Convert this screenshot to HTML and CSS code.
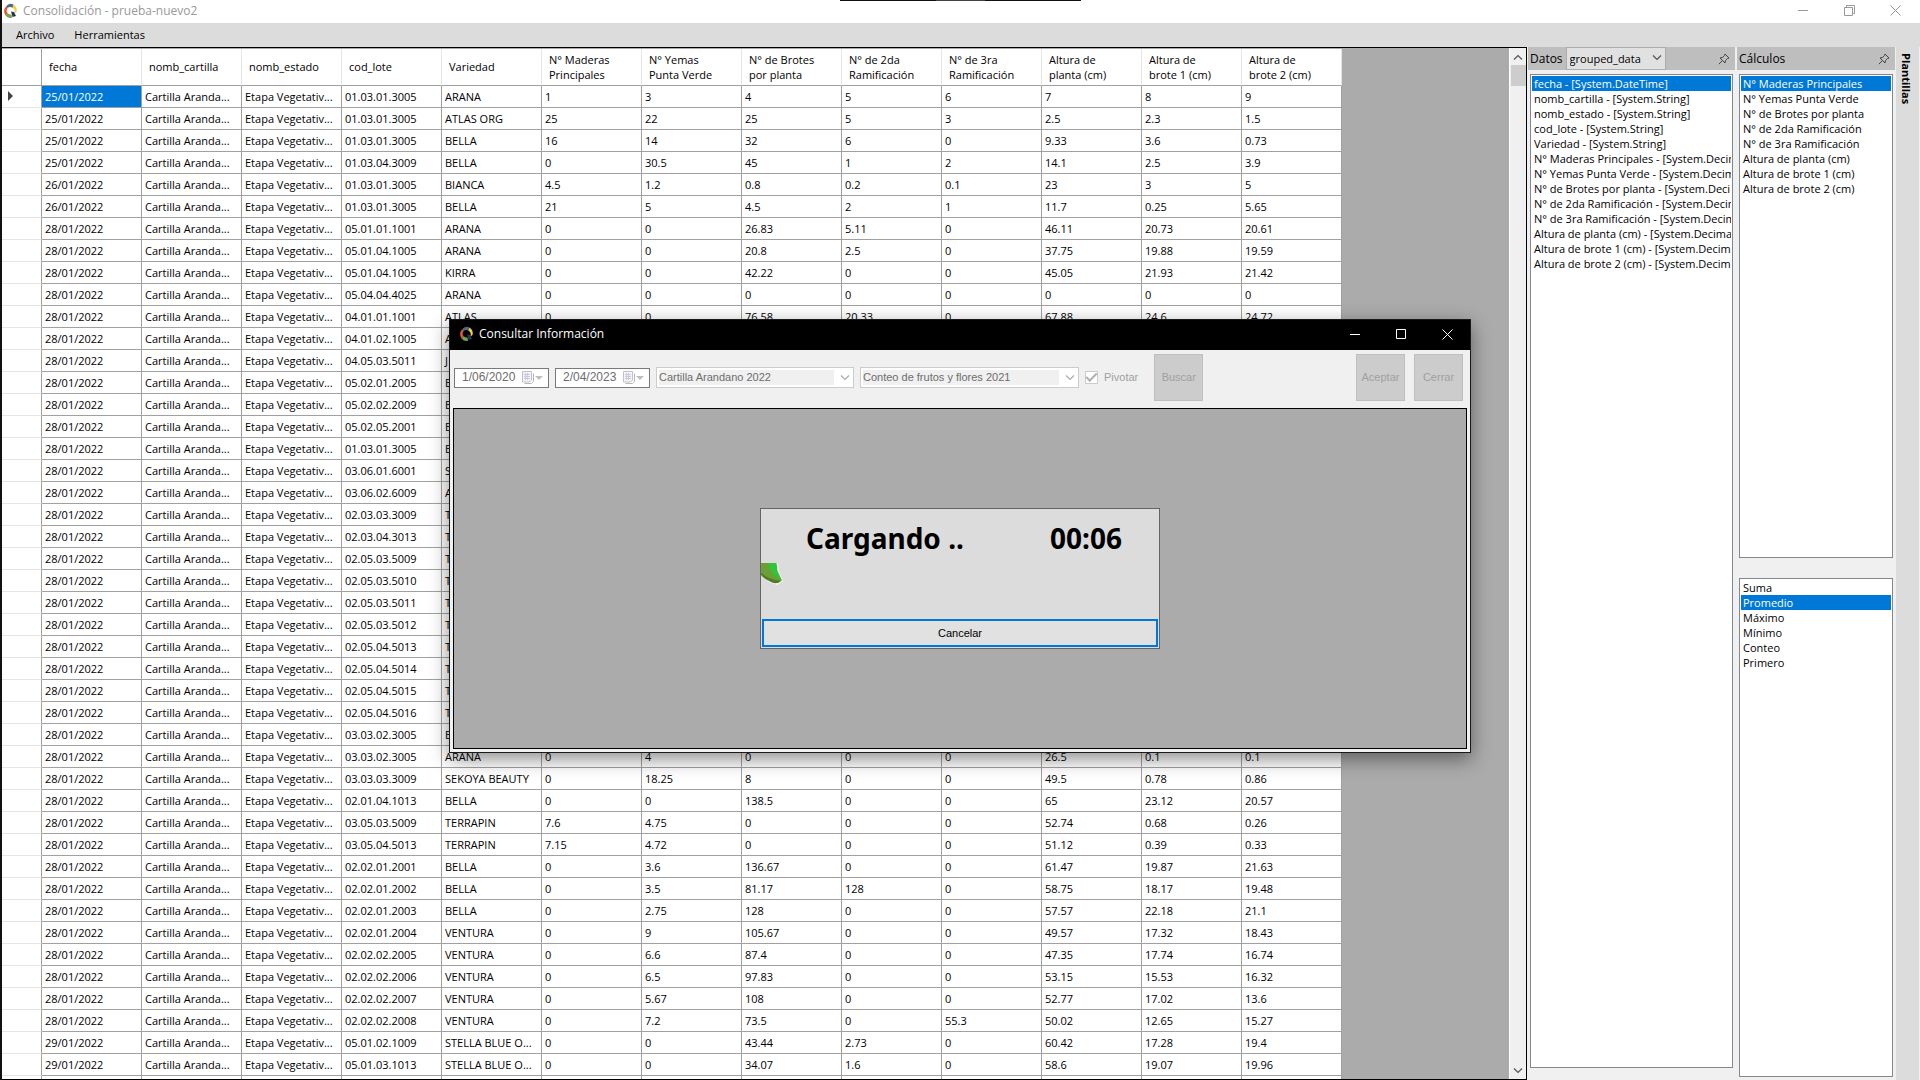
FILE: index.html
```html
<!DOCTYPE html>
<html lang="es">
<head>
<meta charset="utf-8">
<title>Consolidación - prueba-nuevo2</title>
<link rel="stylesheet" href="styles.css">
</head>
<body>
<svg class="defs" aria-hidden="true">
  <symbol id="logo" viewBox="0 0 14 16">
    <path d="M3 3.5A6 6 0 0 1 10.500 1.500L9.500 5A4 4 0 0 0 4.500 5Z" fill="#4f6a8c"/>
    <path d="M10.500 1.500A7 7 0 0 1 13.500 9L11 11A5 5 0 0 0 9.500 4.500Z" fill="#f5cf3a"/>
    <path d="M3 3.500A7 7 0 0 0 2.500 12.500L5 10.500A4 4 0 0 1 4.800 5Z" fill="#e4572e"/>
    <path d="M2.500 12.500A7 7 0 0 0 9 15L8.500 11.500A4 4 0 0 1 5 10.500Z" fill="#6fa84f"/>
    <path d="M8 8.500L11 9L13 13L9.500 14Z" fill="#2d3353"/>
  </symbol>
  <symbol id="chevron" viewBox="0 0 10 6"><path d="M1 .5L5 4.500L9 .5" fill="none" stroke="currentColor" stroke-width="1.200"/></symbol>
  <symbol id="pin" viewBox="0 0 12 12">
    <path d="M7 1L11 5L9.500 5.500L7.500 7.500L7 10L2 5L4.500 4.500L6.500 2.500ZM4.500 7.500L.8 11.200" fill="none" stroke="currentColor"/>
  </symbol>
  <symbol id="calendar" viewBox="0 0 12 13">
    <path d="M2.500 12.500H9.500L11.500 10.500V2.500" fill="none" stroke="#b9b6ba"/>
    <path d="M.5.5H9.500V9L7.500 11H.5Z" fill="#f4f5fa" stroke="#c4c0c6"/>
    <path d="M2 3.500H8M2 5.500H8M2 7.500H8M3.500 2V9M5.500 2V9" stroke="#c9ccdd"/>
  </symbol>
</svg>

<div class="app">
  <header class="titlebar">
    <svg class="logo"><use href="#logo"/></svg>
    <h1 class="caption">Consolidación - prueba-nuevo2</h1>
    <div class="winbtns">
      <button class="winbtn" aria-label="Minimizar"><svg width="11" height="11"><path d="M0 5.500H10" stroke="currentColor"/></svg></button>
      <button class="winbtn" aria-label="Restaurar"><svg width="11" height="11"><path d="M.5 2.500H8.500V10.500H.5ZM2.500 2.500V.5H10.500V8.500H8.500" fill="none" stroke="currentColor"/></svg></button>
      <button class="winbtn" aria-label="Cerrar ventana"><svg width="11" height="11"><path d="M.5.5L10.500 10.500M10.500.5L.5 10.500" stroke="currentColor"/></svg></button>
    </div>
    <div class="screen-tab"></div>
  </header>
  <nav class="menu">
    <button class="menu-item">Archivo</button>
    <button class="menu-item">Herramientas</button>
  </nav>
  <main class="work">
    <section class="grid">
      <div class="grid-body">
        <table class="data">
          <thead>
            <tr>
              <th class="rowhead"></th>
              <th>fecha</th><th>nomb_cartilla</th><th>nomb_estado</th><th>cod_lote</th><th>Variedad</th>
              <th>N° Maderas<br>Principales</th><th>N° Yemas<br>Punta Verde</th><th>N° de Brotes<br>por planta</th>
              <th>N° de 2da<br>Ramificación</th><th>N° de 3ra<br>Ramificación</th><th>Altura de<br>planta (cm)</th>
              <th>Altura de<br>brote 1 (cm)</th><th>Altura de<br>brote 2 (cm)</th>
            </tr>
          </thead>
          <tbody id="rows"></tbody>
        </table>
      </div>
      <div class="scrollbar">
        <svg class="arrow up"><use href="#chevron"/></svg>
        <div class="thumb"></div>
        <svg class="arrow down"><use href="#chevron"/></svg>
      </div>
    </section>

    <section class="panel datos">
      <div class="panel-head">
        <label for="source">Datos</label>
        <div class="combo source">
          <select id="source"><option>grouped_data</option></select>
          <svg class="chev"><use href="#chevron"/></svg>
        </div>
        <svg class="pin"><use href="#pin"/></svg>
      </div>
      <div class="panel-body">
        <select class="list" size="13" aria-label="Datos">
          <option selected>fecha - [System.DateTime]</option>
          <option>nomb_cartilla - [System.String]</option>
          <option>nomb_estado - [System.String]</option>
          <option>cod_lote - [System.String]</option>
          <option>Variedad - [System.String]</option>
          <option>N° Maderas Principales - [System.Decimal]</option>
          <option>N° Yemas Punta Verde - [System.Decimal]</option>
          <option>N° de Brotes por planta - [System.Decimal]</option>
          <option>N° de 2da Ramificación - [System.Decimal]</option>
          <option>N° de 3ra Ramificación - [System.Decimal]</option>
          <option>Altura de planta (cm) - [System.Decimal]</option>
          <option>Altura de brote 1 (cm) - [System.Decimal]</option>
          <option>Altura de brote 2 (cm) - [System.Decimal]</option>
        </select>
      </div>
    </section>

    <section class="panel calculos">
      <div class="panel-head">
        <label for="fields">Cálculos</label>
        <svg class="pin"><use href="#pin"/></svg>
      </div>
      <div class="panel-body">
        <select class="list fields" id="fields" size="8">
          <option selected>N° Maderas Principales</option>
          <option>N° Yemas Punta Verde</option>
          <option>N° de Brotes por planta</option>
          <option>N° de 2da Ramificación</option>
          <option>N° de 3ra Ramificación</option>
          <option>Altura de planta (cm)</option>
          <option>Altura de brote 1 (cm)</option>
          <option>Altura de brote 2 (cm)</option>
        </select>
        <select class="list operations" size="6" aria-label="Operación">
          <option>Suma</option>
          <option selected>Promedio</option>
          <option>Máximo</option>
          <option>Mínimo</option>
          <option>Conteo</option>
          <option>Primero</option>
        </select>
      </div>
    </section>

    <aside class="dock"><button class="dock-tab">Plantillas</button></aside>
  </main>
</div>

<div class="dialog" role="dialog" aria-labelledby="dlg-title">
  <div class="dialog-title">
    <svg class="logo"><use href="#logo"/></svg>
    <h2 class="caption" id="dlg-title">Consultar Información</h2>
    <div class="winbtns">
      <button class="winbtn" aria-label="Minimizar"><svg width="11" height="11"><path d="M0 5.500H10" stroke="currentColor"/></svg></button>
      <button class="winbtn" aria-label="Maximizar"><svg width="11" height="11"><path d="M.5.5H9.500V9.500H.5Z" fill="none" stroke="currentColor"/></svg></button>
      <button class="winbtn" aria-label="Cerrar diálogo"><svg width="11" height="11"><path d="M.5.5L10.500 10.500M10.500.5L.5 10.500" stroke="currentColor"/></svg></button>
    </div>
  </div>
  <form class="toolbar">
    <div class="date"><input type="text" value="1/06/2020" aria-label="Fecha inicial" disabled><svg class="cal"><use href="#calendar"/></svg><span class="caret"></span></div>
    <div class="date"><input type="text" value="2/04/2023" aria-label="Fecha final" disabled><svg class="cal"><use href="#calendar"/></svg><span class="caret"></span></div>
    <div class="combo off card">
      <select aria-label="Cartilla" disabled><option>Cartilla Arandano 2022</option></select>
      <svg class="chev"><use href="#chevron"/></svg>
    </div>
    <div class="combo off state">
      <select aria-label="Estado" disabled><option>Conteo de frutos y flores 2021</option></select>
      <svg class="chev"><use href="#chevron"/></svg>
    </div>
    <label class="check"><input type="checkbox" checked disabled>Pivotar</label>
    <button class="action" type="button" disabled>Buscar</button>
    <div class="actions">
      <button class="action" type="button" disabled>Aceptar</button>
      <button class="action" type="button" disabled>Cerrar</button>
    </div>
  </form>
  <div class="result">
    <div class="loading">
      <div class="loading-text"><strong>Cargando ..</strong><strong>00:06</strong></div>
      <svg class="leaf" viewBox="0 0 22 22">
        <path d="M0 0H17L18 8L22 18L16 22L8 19L0 12Z" fill="#f4f7f2"/>
        <path d="M0 0H15L16 8L21 17.500L15 20Q5 17 0 9Z" fill="#6c9f36"/>
        <path d="M0 9Q5 16 20 18Q16 22 10 19Q3 16 0 12Z" fill="#567a24"/>
        <path d="M7 0H15.500L16.500 8L20.500 17Q10 13 7 0Z" fill="#2fc63c"/>
      </svg>
      <button class="cancel" type="button">Cancelar</button>
    </div>
  </div>
</div>
<script src="rows.js"></script>
</body>
</html>
```

FILE: styles.css
```css
* { box-sizing: border-box; }

body {
  margin: 0;
  background: #000;
  color: #000;
  font: 11px/15px "Open Sans", "Noto Sans", sans-serif;
  overflow: hidden;
}

button, input, select { font: inherit; color: inherit; margin: 0; }
svg { display: block; }
.defs { position: absolute; width: 0; height: 0; }

.app {
  display: flex;
  flex-direction: column;
  height: 100vh;
  padding-left: 2px;
  background: #111;
}

/* title bars */
.titlebar {
  position: relative;
  display: flex;
  align-items: center;
  flex: 0 0 23px;
  padding: 0 2px 2px 1px;
  background: #fff;
  color: #999;
}
.logo { flex: none; width: 14px; height: 16px; }
.caption { margin: 0 0 0 6px; font-size: 12px; font-weight: 400; line-height: 18px; }
.winbtns { display: flex; margin-left: auto; align-self: stretch; }
.winbtn {
  display: flex;
  align-items: center;
  justify-content: center;
  width: 46px;
  padding: 0;
  border: 0;
  background: none;
}
.screen-tab {
  position: absolute;
  top: 0;
  left: 838px;
  width: 241px;
  height: 1px;
  background: linear-gradient(90deg, #111 40%, #444 40% 60%, #111 60%);
}

.menu {
  display: flex;
  flex: 0 0 24px;
  padding-left: 8px;
  background: #dcdcdc;
}
.menu-item { padding: 0 6px 2px; margin-right: 8px; border: 0; background: none; }

/* work area */
.work { display: flex; flex: 1; min-height: 0; background: #f0f0f0; }
.grid {
  display: flex;
  flex: 1;
  min-width: 0;
  border: solid #000;
  border-width: 1px 1px 1px 0;
}
.grid-body { flex: 1; min-width: 0; overflow: hidden; background: #ababab; padding-top: 1px; }

.data { table-layout: fixed; width: 1340px; border-collapse: separate; border-spacing: 0; }
.data th, .data td {
  overflow: hidden;
  padding: 0 0 1px 3px;
  border: solid #a0a0a0;
  border-width: 0 1px 1px 0;
  background: #fff;
  text-align: left;
  font-weight: 400;
  white-space: nowrap;
}
.data td, .data tbody th { height: 22px; }
.data thead th { width: 100px; height: 37px; padding-left: 7px; border-right-color: #e5e5e5; }
.data thead th.rowhead { width: 40px; border-right-color: #a0a0a0; }
.data tbody th { border-bottom-color: #e5e5e5; }
.data td.selected { background: #0078d7; color: #fff; }
.marker { display: block; margin-left: 3px; width: 0; border: solid transparent; border-width: 5px 0 5px 5px; border-left-color: #444; }

.scrollbar {
  display: flex;
  flex-direction: column;
  align-items: center;
  flex: 0 0 17px;
  padding: 6px 0 5px;
  border-left: 1px solid #fff;
  background: #f0f0f0;
  color: #555;
}
.arrow { width: 10px; height: 6px; }
.arrow use { stroke-width: 2px; }
.arrow.up { transform: rotate(180deg); }
.thumb { width: 15px; height: 21px; margin-top: 5px; background: #cdcdcd; }
.arrow.down { margin-top: auto; }

/* side panels */
.panel { display: flex; flex-direction: column; padding-left: 1px; }
.datos { flex: 0 0 209px; }
.calculos { flex: 0 0 160px; }
.panel-head {
  display: flex;
  align-items: center;
  flex: 0 0 23px;
  padding: 0 5px 0 2px;
  margin-right: 1px;
  background: #bebebe;
  font-size: 12px;
}
.panel-head .pin { margin-left: auto; width: 12px; height: 12px; color: #444; }
.panel-body { display: flex; flex-direction: column; flex: 1; gap: 20px; padding: 4px 3px 3px 2px; }
.datos .panel-body { padding-bottom: 12px; }
.list {
  flex: 1 1 0;
  width: 100%;
  min-height: 0;
  padding: 1px;
  border: 1px solid #828790;
  border-radius: 0;
  background: #fff;
  outline: 0;
  overflow: hidden;
}
.list.fields { flex-grow: 33; }
.list.operations { flex-grow: 34; }
.list option { height: 15px; min-height: 15px; padding: 0 2px; line-height: 15px; color: #000; font-size: 11px; overflow: hidden; }
.list option:checked { background: #0078d7 linear-gradient(#0078d7, #0078d7); color: #fff; }

.combo { position: relative; display: flex; }
.combo select {
  width: 100%;
  height: 100%;
  padding: 0 3px;
  border: 1px solid #adadad;
  border-radius: 0;
  background: #e1e1e1;
  appearance: none;
  opacity: 1;
}
.chev { position: absolute; right: 4px; top: 8px; width: 10px; height: 6px; color: #555; pointer-events: none; }
.source { width: 100px; height: 23px; margin-left: 3px; font-size: 11px; }

.dock { flex: 0 0 24px; border-right: 1px solid #f0f0f0; background: #dcdcdc; }
.dock-tab { padding: 6px 3px; border: 0; background: none; font-weight: 700; writing-mode: vertical-rl; line-height: 14px; }

/* query dialog floating over the main window */
.dialog {
  position: absolute;
  top: 319px;
  left: 449px;
  display: flex;
  flex-direction: column;
  width: 1022px;
  height: 434px;
  border: 1px solid #1a1a1a;
  background: #f0f0f0;
  box-shadow: 0 6px 18px rgba(0, 0, 0, .45);
  font-family: "Liberation Sans", Arial, sans-serif;
}
.dialog-title {
  display: flex;
  align-items: center;
  flex: 0 0 30px;
  padding: 0 0 2px 9px;
  background: #000;
  color: #fff;
  font-family: "Open Sans", "Noto Sans", sans-serif;
}
.toolbar { display: flex; align-items: center; gap: 6px; flex: none; padding: 4px 7px 7px 4px; color: #6d6d6d; }

.date {
  display: flex;
  align-items: center;
  width: 95px;
  height: 20px;
  padding: 0 5px 0 7px;
  border: 1px solid #7a7a7a;
  background: #fff;
}
.date input { flex: 1; min-width: 0; padding: 0; border: 0; background: none; font-size: 12px; }
.cal { width: 12px; height: 13px; }
.caret { margin-left: 1px; border: solid transparent; border-width: 4px 4px 0; border-top-color: #bfbfbf; }

.off { height: 21px; padding: 2px; border: 1px solid #ccc; background: #fff; }
.off select { width: auto; flex: 1; margin-right: 17px; padding: 0; border: 0; background: #f0f0f0; }
.off .chev { right: 3px; top: 7px; color: #ababab; }
.card { width: 198px; }
.state { width: 219px; }

.check { display: flex; align-items: center; gap: 6px; margin-right: 10px; color: #a0a0a0; }
.check input {
  width: 13px;
  height: 13px;
  border: 1px solid #ccc;
  appearance: none;
  background: #fff;
  display: grid;
  place-items: center;
}
.check input::after { content: ""; width: 9px; height: 4px; margin-bottom: 3px; border: solid #b0b0b0; border-width: 0 0 2px 2px; transform: rotate(-45deg); }

.action { width: 49px; height: 47px; padding: 0; border: 1px solid #bfbfbf; background: #ccc; color: #a0a0a0; }
.actions { display: flex; gap: 9px; margin-left: auto; }

.result {
  display: flex;
  align-items: center;
  justify-content: center;
  flex: 1;
  margin: 0 3px 3px;
  border: 1px solid #000;
  background: #ababab;
}
.loading {
  display: flex;
  flex-direction: column;
  width: 400px;
  height: 141px;
  padding: 0 1px 1px 0;
  border: 1px solid #646464;
  background: #dcdcdc;
}
.loading-text {
  display: flex;
  justify-content: space-between;
  padding: 9px 36px 5px 45px;
  font: 28px/40px "Noto Sans", "Open Sans", sans-serif;
}
.leaf { width: 22px; height: 22px; }
.cancel { height: 28px; margin: auto 0 0 1px; border: 2px solid #0078d7; background: #e1e1e1; }
```

FILE: rows.js
```js
// date | lot | variety | eight measurements
const records = `
25|01.03.01.3005|ARANA|1 3 4 5 6 7 8 9
25|01.03.01.3005|ATLAS ORG|25 22 25 5 3 2.5 2.3 1.5
25|01.03.01.3005|BELLA|16 14 32 6 0 9.33 3.6 0.73
25|01.03.04.3009|BELLA|0 30.5 45 1 2 14.1 2.5 3.9
26|01.03.01.3005|BIANCA|4.5 1.2 0.8 0.2 0.1 23 3 5
26|01.03.01.3005|BELLA|21 5 4.5 2 1 11.7 0.25 5.65
28|05.01.01.1001|ARANA|0 0 26.83 5.11 0 46.11 20.73 20.61
28|05.01.04.1005|ARANA|0 0 20.8 2.5 0 37.75 19.88 19.59
28|05.01.04.1005|KIRRA|0 0 42.22 0 0 45.05 21.93 21.42
28|05.04.04.4025|ARANA|0 0 0 0 0 0 0 0
28|04.01.01.1001|ATLAS|0 0 76.58 20.33 0 67.88 24.6 24.72
28|04.01.02.1005|A|
28|04.05.03.5011|J|
28|05.02.01.2005|B|
28|05.02.02.2009|B|
28|05.02.05.2001|B|
28|01.03.01.3005|B|
28|03.06.01.6001|S|
28|03.06.02.6009|A|
28|02.03.03.3009|T|
28|02.03.04.3013|T|
28|02.05.03.5009|T|
28|02.05.03.5010|T|
28|02.05.03.5011|T|
28|02.05.03.5012|T|
28|02.05.04.5013|T|
28|02.05.04.5014|T|
28|02.05.04.5015|T|
28|02.05.04.5016|T|
28|03.03.02.3005|B|
28|03.03.02.3005|ARANA|0 4 0 0 0 26.5 0.1 0.1
28|03.03.03.3009|SEKOYA BEAUTY|0 18.25 8 0 0 49.5 0.78 0.86
28|02.01.04.1013|BELLA|0 0 138.5 0 0 65 23.12 20.57
28|03.05.03.5009|TERRAPIN|7.6 4.75 0 0 0 52.74 0.68 0.26
28|03.05.04.5013|TERRAPIN|7.15 4.72 0 0 0 51.12 0.39 0.33
28|02.02.01.2001|BELLA|0 3.6 136.67 0 0 61.47 19.87 21.63
28|02.02.01.2002|BELLA|0 3.5 81.17 128 0 58.75 18.17 19.48
28|02.02.01.2003|BELLA|0 2.75 128 0 0 57.57 22.18 21.1
28|02.02.01.2004|VENTURA|0 9 105.67 0 0 49.57 17.32 18.43
28|02.02.02.2005|VENTURA|0 6.6 87.4 0 0 47.35 17.74 16.74
28|02.02.02.2006|VENTURA|0 6.5 97.83 0 0 53.15 15.53 16.32
28|02.02.02.2007|VENTURA|0 5.67 108 0 0 52.77 17.02 13.6
28|02.02.02.2008|VENTURA|0 7.2 73.5 0 55.3 50.02 12.65 15.27
29|05.01.02.1009|STELLA BLUE O...|0 0 43.44 2.73 0 60.42 17.28 19.4
29|05.01.03.1013|STELLA BLUE O...|0 0 34.07 1.6 0 58.6 19.07 19.96`.trim().split("\n");

const body = document.getElementById("rows");
records.forEach((record, i) => {
  const [day, lot, variety, values] = record.split("|");
  const numbers = values ? values.split(" ") : Array(8).fill("");
  const cells = [day + "/01/2022", "Cartilla Aranda...", "Etapa Vegetativ...", lot, variety, ...numbers];
  const tr = body.insertRow();
  const head = document.createElement("th");
  if (i === 0) head.innerHTML = '<span class="marker"></span>';
  tr.append(head);
  cells.forEach((text) => { tr.insertCell().textContent = text; });
});
body.rows[0].cells[1].className = "selected";

// the next row only shows its top edge
const last = body.insertRow();
last.append(document.createElement("th"));
for (let c = 0; c < 13; c++) last.insertCell();
```
